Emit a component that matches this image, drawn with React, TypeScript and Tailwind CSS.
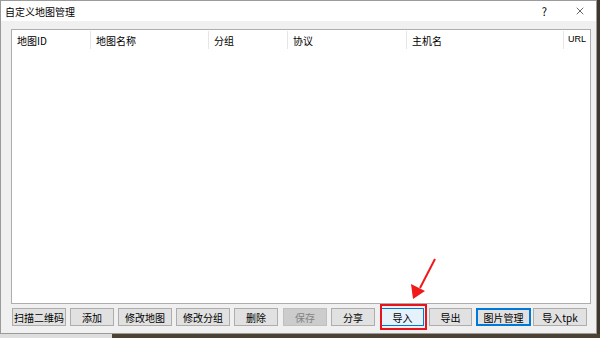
import { X } from 'lucide-react';

const columns = [
    { title: '地图ID', width: 'w-[79px]' },
    { title: '地图名称', width: 'w-[118px]' },
    { title: '分组', width: 'w-[79px]' },
    { title: '协议', width: 'w-[119px]' },
    { title: '主机名', width: 'w-[157px]' },
];

interface Btn {
    label: string;
    cls: string;
    kind?: 'disabled' | 'hot' | 'default';
}

const buttons: Btn[] = [
    { label: '扫描二维码', cls: 'ml-[11px] w-[54px]' },
    { label: '添加', cls: 'ml-[4px] w-[44px]' },
    { label: '修改地图', cls: 'ml-[4px] w-[54px]' },
    { label: '修改分组', cls: 'ml-[4px] w-[54px]' },
    { label: '删除', cls: 'ml-[4px] w-[44px]' },
    { label: '保存', cls: 'ml-[5px] w-[44px]', kind: 'disabled' },
    { label: '分享', cls: 'ml-[4px] w-[44px]' },
    { label: '导入', cls: 'ml-[6px] w-[43px]', kind: 'hot' },
    { label: '导出', cls: 'ml-[5px] w-[43px]' },
    { label: '图片管理', cls: 'ml-[4px] w-[55px]', kind: 'default' },
    { label: '导入tpk', cls: 'ml-[2px] w-[54px]' },
];

function buttonStyle(kind?: Btn['kind']) {
    if (kind === 'disabled') return 'bg-[#cccccc] border-[#bfbfbf] text-[#838383]';
    if (kind === 'hot') return 'bg-[#e5f1fb] border-[#0078d7] text-black';
    if (kind === 'default') return 'bg-[#e1e1e1] border-[#0078d7] border-2 text-black';
    return 'bg-[#e1e1e1] border-[#adadad] text-black';
}

export default function App() {
    return (
        <div
            className="relative w-[600px] h-[338px] overflow-hidden bg-[#4a4232] flex flex-col"
            style={{ fontFamily: '"Microsoft YaHei", "Noto Sans CJK SC", sans-serif' }}
        >
            <div className="flex h-[334px]">
                {/* dialog window */}
                <div className="w-[597px] h-full flex flex-col border border-[#9b9b9b] bg-[#f0f0f0]">
                    {/* title bar */}
                    <div className="h-[20px] bg-white flex items-center pl-[4px] text-[10px] text-black shrink-0">
                        <span>自定义地图管理</span>
                        <span className="ml-auto mr-[27px] text-[11px]">?</span>
                        <X className="mr-[10px] w-[12px] h-[12px]" strokeWidth={1.2} />
                    </div>

                    {/* list view */}
                    <div className="mt-[8px] ml-[10px] mr-[5px] h-[275px] bg-white border border-[#adadad] flex flex-col">
                        <div className="flex h-[20px] items-center text-[10px] text-black">
                            {columns.map(col => (
                                <div
                                    key={col.title}
                                    className={`${col.width} h-[18px] flex items-center pl-[5px] border-r border-[#e5e5e5] shrink-0`}
                                >
                                    {col.title}
                                </div>
                            ))}
                            <div className="pl-[4px] text-[9px]" style={{ fontFamily: '"Liberation Sans", sans-serif' }}>URL</div>
                        </div>
                    </div>

                    {/* buttons */}
                    <div className="flex mt-[4px] h-[18px]">
                        {buttons.map(b => (
                            <div
                                key={b.label}
                                className={`${b.cls} h-[18px] border flex items-center justify-center text-[10px] shrink-0 ${buttonStyle(b.kind)}`}
                            >
                                {b.label}
                            </div>
                        ))}
                    </div>
                </div>
                <div className="flex-1 bg-[#3e382c]" />
            </div>
            {/* desktop strip below */}
            <div className="flex h-[4px]">
                <div className="w-[112px] bg-[#dedede]" />
                <div className="flex-1 bg-[#4a4232]" />
            </div>

            {/* annotation: red box + arrow */}
            <div className="absolute left-[380px] top-[304px] w-[47px] h-[26px] border-2 border-[#e8141b]" />
            <svg className="absolute left-0 top-0" width="600" height="338" viewBox="0 0 600 338">
                <line x1="435" y1="259" x2="420" y2="288" stroke="#f01a1a" strokeWidth="2" />
                <polygon points="413,299 411,284 425,291" fill="#f01a1a" />
            </svg>
        </div>
    );
}
